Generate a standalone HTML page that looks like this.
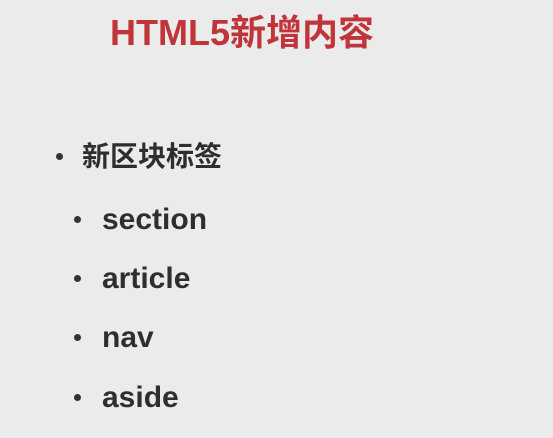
<!DOCTYPE html>
<html><head><meta charset="utf-8"><style>
html,body{margin:0;padding:0}
body{width:553px;height:438px;background:#ebebeb;position:relative;overflow:hidden;font-family:"Liberation Sans","Noto Sans CJK SC",sans-serif;}
.t{position:absolute;left:110px;top:11px;font-size:36px;font-weight:bold;color:#c0353a;white-space:nowrap;line-height:44px}
.l{position:absolute;white-space:nowrap;color:#2e2e2e;font-weight:bold}
.b{position:absolute;width:7px;height:7px;border-radius:50%;background:#333}
</style></head><body>
<div class="t">HTML5新增内容</div>
<div class="b" style="left:56px;top:153px"></div>
<div class="l" style="left:82px;top:137px;font-size:28px;line-height:40px;font-weight:bold">新区块标签</div>
<div class="b" style="left:74px;top:216px"></div>
<div class="l" style="left:102px;top:200px;font-size:30px;line-height:40px">section</div>
<div class="b" style="left:74px;top:275px"></div>
<div class="l" style="left:102px;top:259px;font-size:30px;line-height:40px">article</div>
<div class="b" style="left:74px;top:334px"></div>
<div class="l" style="left:102px;top:318px;font-size:30px;line-height:40px">nav</div>
<div class="b" style="left:74px;top:394px"></div>
<div class="l" style="left:102px;top:378px;font-size:30px;line-height:40px">aside</div>
</body></html>
